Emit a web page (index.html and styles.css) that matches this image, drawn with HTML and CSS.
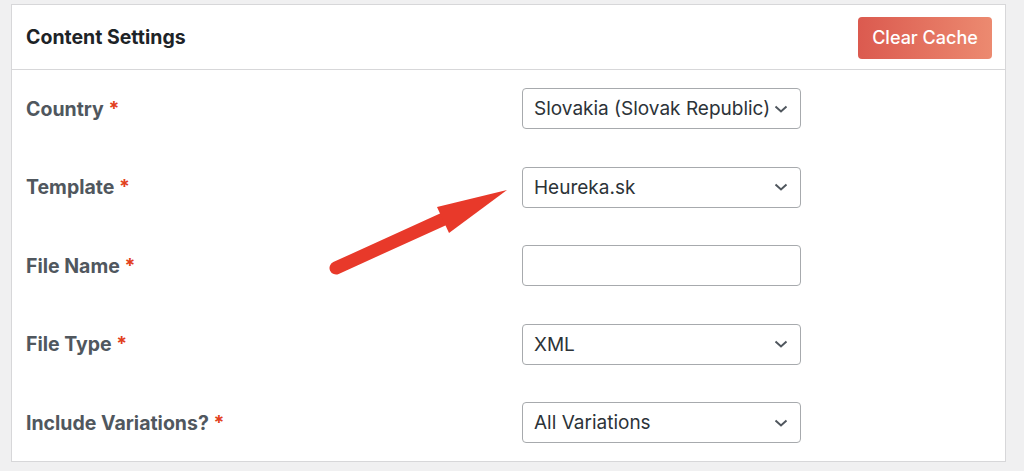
FILE: index.html
```html
<!DOCTYPE html>
<html>
    <head>
        <meta charset = utf-8>
        <title>Content Settings</title>
        <link rel="stylesheet" href="styles.css">
    </head>

    <body>
        <div class = panel>
            <div class = head>
                <h2>Content Settings</h2>
                <button class = clear>Clear Cache</button>
            </div>

            <div class = rows>
                <div class = row>
                    <label>Country <span class = req>*</span></label>
                    <div class = "field select">Slovakia (Slovak Republic)</div>
                </div>
                <div class = row>
                    <label>Template <span class = req>*</span></label>
                    <div class = "field select">Heureka.sk</div>
                </div>
                <div class = row>
                    <label>File Name <span class = req>*</span></label>
                    <div class = field></div>
                </div>
                <div class = row>
                    <label>File Type <span class = req>*</span></label>
                    <div class = "field select">XML</div>
                </div>
                <div class = row>
                    <label>Include Variations? <span class = req>*</span></label>
                    <div class = "field select">All Variations</div>
                </div>
            </div>

            <svg class = arrow width = 200 height = 110 viewBox = "0 0 200 110">
                <line x1 = 10 y1 = 93 x2 = 120 y2 = 43 stroke = "#e8392a" stroke-width = 13 stroke-linecap = round />
                <polygon points = "181,15 111,32 123,58" fill = "#e8392a" />
            </svg>
        </div>
    </body>
</html>
```

FILE: styles.css
```css
html {
    background-color: #f0f0f1;
    font-family: Inter, "Liberation Sans", sans-serif;
}

body {
    margin: 0;
    padding: 4px 18px 0 11px
}

.panel {
    position: relative;
    background: #fff;
    border: 1px solid #d7d7d9;
    height: 458px;
    box-sizing: border-box
}

.head {
    display: flex;
    align-items: center;
    justify-content: space-between;
    height: 64px;
    padding: 0 13px 0 14px;
    border-bottom: 1px solid #d7d7d9
}

h2 {
    margin: 0;
    font-size: 19.5px;
    font-weight: 700;
    color: #1d2327
}

.clear {
    width: 134px;
    height: 42px;
    margin-top: 1px;
    border: none;
    border-radius: 4px;
    background: linear-gradient(90deg, #db5a4f, #ec8a70);
    color: #fff;
    font-family: inherit;
    font-size: 18px;
    font-weight: 500
}

.rows {
    display: flex;
    flex-direction: column;
    gap: 37.5px;
    padding: 18px 0 0 14px
}

.row {
    display: flex;
    align-items: center
}

label {
    width: 496px;
    font-size: 19.5px;
    font-weight: 700;
    color: #50575e
}

.req {color: #e2401c}

.field {
    width: 279px;
    height: 41px;
    box-sizing: border-box;
    border: 1px solid #a7aaad;
    border-radius: 4px;
    padding: 0 11px;
    display: flex;
    align-items: center;
    font-size: 19px;
    color: #2c3338;
    white-space: nowrap;
    overflow: hidden
}

.select {
    background-image: url("data:image/svg+xml,%3Csvg xmlns='http://www.w3.org/2000/svg' width='14' height='8' viewBox='0 0 14 8'%3E%3Cpath d='M1.5 1.5l5.5 5 5.5-5' fill='none' stroke='%2350575e' stroke-width='2'/%3E%3C/svg%3E");
    background-repeat: no-repeat;
    background-position: right 12px center;
    padding-right: 30px
}

.arrow {
    position: absolute;
    left: 314px;
    top: 170px
}
```
